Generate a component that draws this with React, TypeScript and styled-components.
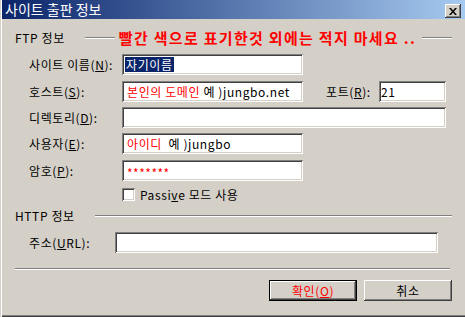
import React from "react"
import styled, { createGlobalStyle } from "styled-components"

const FACE = "#d4d0c8"
const SHADOW = "#808080"
const DARK = "#404040"
const FONT = `"Noto Sans CJK KR", "Liberation Sans", sans-serif`

const GlobalStyle = createGlobalStyle`
  html, body {
    margin: 0;
    padding: 0;
    background: ${FACE};
  }
  body {
    font-family: ${FONT};
    font-size: 12px;
  }
`

const App = () => {
  return (
    <Window>
      <GlobalStyle />
      <TitleBar>
        <Title>사이트 출판 정보</Title>
        <CloseButton>
          <svg width="8" height="7" viewBox="0 0 8 7">
            <path d="M0 0h2l2 2.5 2-2.5h2L5 3.5 8 7H6L4 4.5 2 7H0l3-3.5z" fill="#000" />
          </svg>
        </CloseButton>
      </TitleBar>
      <Body>
        <GroupHeader>
          <GroupTitle>FTP 정보</GroupTitle>
          <Etch $width={30} />
          <Warning>빨간 색으로 표기한것 외에는 적지 마세요 ..</Warning>
          <Etch />
        </GroupHeader>

        <Row $gap={8}>
          <Label>
            사이트 이름(<u>N</u>):
          </Label>
          <Field $width={181} $pad={3}>
            <Selected>자기이름</Selected>
          </Field>
        </Row>

        <Row $gap={6}>
          <Label>
            호스트(<u>S</u>):
          </Label>
          <Field $width={181}>
            <Red>본인의 도메인</Red>&nbsp;예 )jungbo.net
          </Field>
          <Label $width={53} $indent={23}>
            포트(<u>R</u>):
          </Label>
          <Field $width={67} $pad={2}>
            21
          </Field>
        </Row>

        <Row $gap={5}>
          <Label>
            디렉토리(<u>D</u>):
          </Label>
          <Field $width={324} />
        </Row>

        <Row $gap={5}>
          <Label>
            사용자(<u>E</u>):
          </Label>
          <Field $width={181}>
            <Red>아이디</Red>&nbsp;&nbsp;예 )jungbo
          </Field>
        </Row>

        <Row $gap={6}>
          <Label>
            암호(<u>P</u>):
          </Label>
          <Field $width={181}>
            <Stars>*******</Stars>
          </Field>
        </Row>

        <CheckRow>
          <CheckBox />
          <CheckLabel>
            Passi<u>v</u>e 모드 사용
          </CheckLabel>
        </CheckRow>

        <GroupHeader $gap={7}>
          <GroupTitle>HTTP 정보</GroupTitle>
          <Etch />
        </GroupHeader>

        <Row $gap={8}>
          <Label $width={86}>
            주소(<u>U</u>RL):
          </Label>
          <Field $width={323} />
        </Row>

        <Separator />

        <ButtonBar>
          <Button $default>
            확인(<u>O</u>)
          </Button>
          <Button>취소</Button>
        </ButtonBar>
      </Body>
    </Window>
  )
}

const Window = styled.div`
  width: 465px;
  height: 317px;
  box-sizing: border-box;
  padding-left: 2px;
  display: flex;
  flex-direction: column;
  background: ${FACE};
  box-shadow: inset 1px 0 ${FACE}, inset 2px 0 #fff, inset 0 -1px ${DARK},
    inset 0 -2px ${SHADOW};
  overflow: hidden;
`

const TitleBar = styled.div`
  height: 19px;
  flex-shrink: 0;
  display: flex;
  align-items: flex-start;
  padding-left: 3px;
  background: linear-gradient(to right, #0a246a, #a6caf0);
`

const Title = styled.div`
  flex: 1;
  color: #fff;
  font-size: 14px;
  line-height: 19px;
`

const CloseButton = styled.div`
  width: 16px;
  height: 14px;
  margin: 4px 4px 0 0;
  box-sizing: border-box;
  display: flex;
  align-items: center;
  justify-content: center;
  background: ${FACE};
  box-shadow: inset -1px -1px ${DARK}, inset 1px 1px #fff,
    inset -2px -2px ${SHADOW}, inset 2px 2px ${FACE};
`

const Body = styled.div`
  flex: 1;
  display: flex;
  flex-direction: column;
  padding: 11px 13px 0 13px;
`

const GroupHeader = styled.div<{ $gap?: number }>`
  height: 16px;
  margin-top: ${(p) => p.$gap ?? 0}px;
  display: flex;
  align-items: center;
`

const GroupTitle = styled.div`
  font-size: 12px;
  line-height: 16px;
  letter-spacing: 0.6px;
  color: #000;
  margin-right: 20px;
  white-space: nowrap;
`

const Etch = styled.div<{ $width?: number }>`
  height: 0;
  border-top: 1px solid ${SHADOW};
  border-bottom: 1px solid #fff;
  ${(p) => (p.$width ? `width: ${p.$width}px;` : "flex: 1;")}
`

const Warning = styled.div`
  color: #ff0000;
  font-weight: bold;
  font-size: 15px;
  line-height: 16px;
  letter-spacing: 1.3px;
  margin: 0 6px 0 4px;
  white-space: nowrap;
`

const Row = styled.div<{ $gap: number }>`
  height: 21px;
  margin-top: ${(p) => p.$gap}px;
  padding-left: 14px;
  display: flex;
  align-items: center;
`

const Label = styled.div<{ $width?: number; $indent?: number }>`
  width: ${(p) => p.$width ?? 93}px;
  margin-left: ${(p) => p.$indent ?? 0}px;
  flex-shrink: 0;
  font-size: 12px;
  line-height: 21px;
  letter-spacing: 0.6px;
  color: #000;
  white-space: nowrap;

  u {
    text-underline-offset: 1px;
  }
`

const Field = styled.div<{ $width: number; $pad?: number }>`
  width: ${(p) => p.$width}px;
  height: 21px;
  box-sizing: border-box;
  padding-left: ${(p) => p.$pad ?? 5}px;
  display: flex;
  align-items: center;
  background: #fff;
  box-shadow: inset 1px 1px ${SHADOW}, inset -1px -1px #fff,
    inset 2px 2px ${DARK}, inset -2px -2px ${FACE};
  font-size: 12px;
  line-height: 14px;
  letter-spacing: 0.6px;
  color: #000;
  white-space: nowrap;
  overflow: hidden;
`

const Selected = styled.span`
  background: #0a246a;
  color: #fff;
  padding: 0 1px;
  line-height: 15px;
`

const Red = styled.span`
  color: #ff0000;
`

const Stars = styled.span`
  color: #ff0000;
  letter-spacing: 0.5px;
  margin-top: 4px;
`

const CheckRow = styled.div`
  height: 13px;
  margin-top: 7px;
  padding-left: 107px;
  display: flex;
  align-items: center;
`

const CheckBox = styled.div`
  width: 13px;
  height: 13px;
  box-sizing: border-box;
  background: #fff;
  box-shadow: inset 1px 1px ${SHADOW}, inset -1px -1px #fff,
    inset 2px 2px ${DARK}, inset -2px -2px ${FACE};
`

const CheckLabel = styled.div`
  margin-left: 5px;
  font-size: 12px;
  line-height: 13px;
  letter-spacing: 0.6px;
  color: #000;
  white-space: nowrap;
`

const Separator = styled.div`
  margin-top: 15px;
  margin-right: 2px;
  border-top: 1px solid ${SHADOW};
  border-bottom: 1px solid #fff;
`

const ButtonBar = styled.div`
  margin-top: 10px;
  display: flex;
  justify-content: flex-end;
  gap: 7px;
`

const Button = styled.div<{ $default?: boolean }>`
  width: 88px;
  height: 21px;
  box-sizing: border-box;
  display: flex;
  align-items: center;
  justify-content: center;
  font-size: 12px;
  line-height: 14px;
  letter-spacing: 0.6px;
  background: ${FACE};
  color: ${(p) => (p.$default ? "#ff0000" : "#000")};
  box-shadow: ${(p) =>
    p.$default
      ? `inset 0 0 0 1px #000, inset -2px -2px ${DARK}, inset 2px 2px #fff, inset -3px -3px ${SHADOW}`
      : `inset -1px -1px ${DARK}, inset 1px 1px #fff, inset -2px -2px ${SHADOW}`};
`

export default App
